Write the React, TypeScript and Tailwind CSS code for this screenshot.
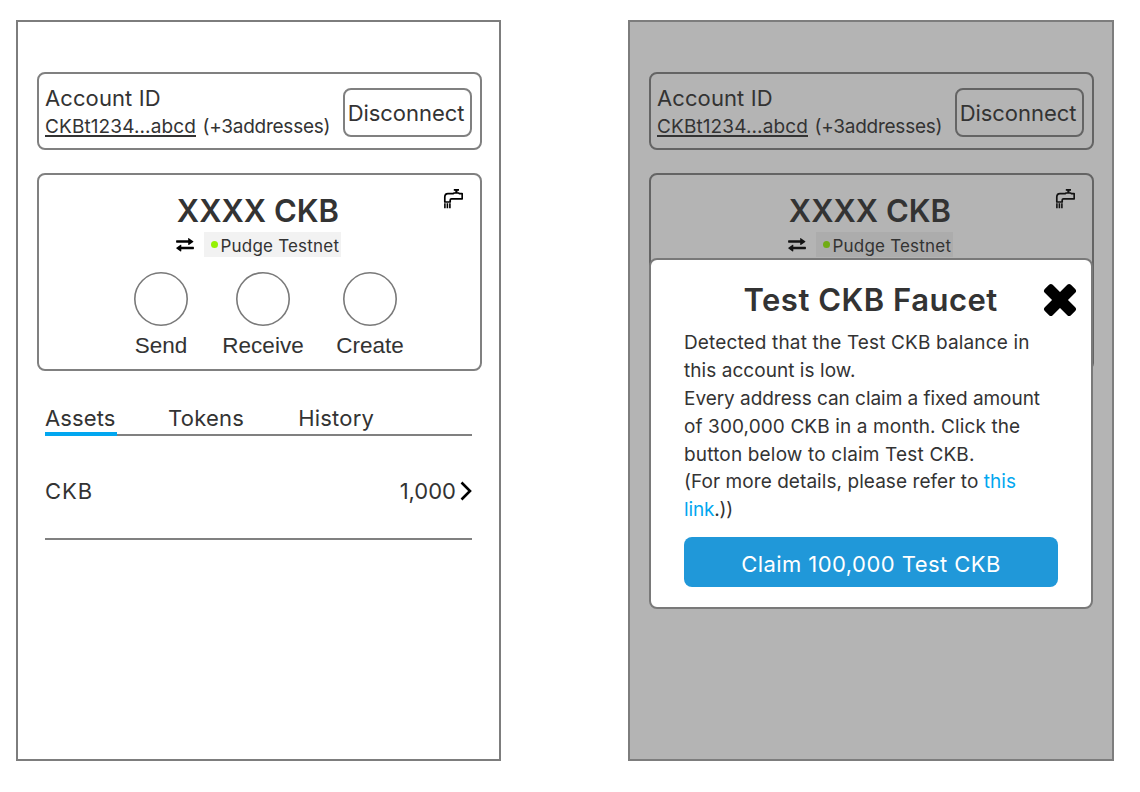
import type { ReactNode } from "react";

function FaucetIcon() {
  return (
    <svg width="20" height="20" viewBox="0 0 20 20" fill="none" stroke="#000">
      <path d="M10.800 0.900h5.200" strokeWidth="1.800" />
      <path d="M13.400 1v3" strokeWidth="2.200" />
      <path d="M1.800 13V8.200C1.800 5.800 3 4.700 5 4.700h5l1.200-.7h4.300l1.200.7h2.500v5.100H8.500c-.9 0-1.300.5-1.300 1.300V13z" strokeWidth="1.700" strokeLinejoin="round" />
      <path d="M1.900 14.300v4.900M4.400 14.300v4.900M6.900 14.300v4.900" strokeWidth="1.600" />
    </svg>
  );
}

function SwapIcon() {
  return (
    <svg width="18" height="14" viewBox="0 0 18 14" fill="#000">
      <path d="M.6 2.300h11.600V.5c0-.4.4-.5.7-.3l4.300 3c.3.200.3.500 0 .7l-4.300 3c-.3.200-.7.100-.7-.3V4.800H.6c-.3 0-.5-.2-.5-.5V2.800c0-.3.2-.5.5-.5z" />
      <path d="M17.400 8.700H5.300V7.100c0-.4-.4-.5-.7-.3L.4 9.700c-.3.200-.3.500 0 .7l4.200 3c.3.200.7.100.7-.3v-1.900h12.100c.3 0 .5-.2.5-.5V9.200c0-.3-.2-.5-.5-.5z" />
    </svg>
  );
}

function CloseIcon() {
  return (
    <svg width="34" height="34" viewBox="-17 -17 34 34" fill="#000">
      <rect x="-18.500" y="-5.600" width="37" height="11.200" rx="2.600" transform="rotate(45)" />
      <rect x="-18.500" y="-5.600" width="37" height="11.200" rx="2.600" transform="rotate(-45)" />
    </svg>
  );
}

function Action({ label, className }: { label: string; className: string }) {
  return (
    <div className={`flex flex-col items-center ${className}`}>
      <svg className="size-[54px] shrink-0" viewBox="0 0 54 54" fill="none" stroke="#797979">
        <circle cx="27" cy="27" r="26.200" strokeWidth="1.600" />
      </svg>
      <span className="mt-[5px] font-['Liberation_Sans',sans-serif] text-[22.500px] leading-[30px]">{label}</span>
    </div>
  );
}

function Wallet({ collapsed = false }: { collapsed?: boolean }) {
  return (
    <div className="w-[445px]">
      <section className="flex h-[78px] justify-between rounded-[8px] border-2 border-[#808080] pt-[10px] pr-2 pl-[6px]">
        <div>
          <div className="text-[22px] leading-7 tracking-[0.1px]">Account ID</div>
          <div className="flex pt-px text-[19px] leading-7 whitespace-nowrap">
            <span className="tracking-[0.12px] underline decoration-[1.500px] underline-offset-[2px]">CKBt1234...abcd</span>
            <span className="ml-[6.500px] tracking-[-0.25px]">(+3addresses)</span>
          </div>
        </div>
        <button className="mt-1 h-[49px] w-[129px] rounded-[8px] border-2 border-[#808080] pr-[3px] text-[22px] leading-7 tracking-[-0.05px]">
          Disconnect
        </button>
      </section>

      <section className="mt-[23px] h-[198px] rounded-[8px] border-2 border-[#808080]">
        <div className="flex h-[57px] justify-end pr-[17px]">
          <h1 className="mt-[16px] mr-[104px] text-[31px] leading-10 font-semibold whitespace-nowrap">XXXX CKB</h1>
          <div className="mt-[14px]">
            <FaucetIcon />
          </div>
        </div>
        <div className="flex items-center pl-[137px]">
          <SwapIcon />
          <div className="ml-[10px] flex h-[25px] w-[137px] items-center bg-[#f2f2f2] pl-[7px]">
            <span className="size-[7px] rounded-full bg-[#95f204]" />
            <span className="ml-[2.500px] pt-[2px] text-[17px] leading-6 tracking-[0.2px] whitespace-nowrap">Pudge Testnet</span>
          </div>
        </div>
        {!collapsed && (
          <div className="mt-[15px] flex pl-[95px]">
            <Action label="Send" className="w-[54px]" />
            <Action label="Receive" className="ml-[34.500px] w-[81px]" />
            <Action label="Create" className="ml-[32.500px] w-[68px]" />
          </div>
        )}
      </section>

      {!collapsed && (
        <>
          <nav className="mt-[32px] ml-2 flex h-[33px] w-[427px] border-b-2 border-[#808080] text-[22px] leading-[30px] tracking-[0.1px]">
            <span className="h-[33px] w-[72px] shrink-0 border-b-4 border-[#02a7f0]">Assets</span>
            <span className="ml-[51px] tracking-[0.25px]">Tokens</span>
            <span className="ml-[54px] tracking-[0.2px]">History</span>
          </nav>
          <div className="ml-2 flex h-[104px] w-[427px] items-center justify-between border-b-2 border-[#808080] pt-2 text-[22px] leading-[30px]">
            <span className="tracking-[1px]">CKB</span>
            <span className="flex items-center">
              1,000
              <svg className="ml-1 h-5 w-3" viewBox="0 0 12 20" fill="none" stroke="#000" strokeWidth="2.600">
                <path d="M1.500 1.500L10 10L1.500 18.500" />
              </svg>
            </span>
          </div>
        </>
      )}
    </div>
  );
}

function Screen({ className, collapsed, children }: { className: string; collapsed?: boolean; children?: ReactNode }) {
  return (
    <main className={`relative h-[741px] shrink-0 border-2 border-[#7d7d7d] pt-[50px] pl-[19px] ${className}`}>
      <Wallet collapsed={collapsed} />
      {children}
    </main>
  );
}

function FaucetDialog() {
  return (
    <div className="absolute inset-0 bg-[#333333]/37">
      <div role="dialog" className="mt-[236px] ml-[19px] h-[351px] w-[444px] rounded-[8px] border-2 border-[#797979] bg-white pl-[33px]">
        <div className="flex h-[69.400px]">
          <h2 className="mt-[20px] ml-[59.500px] w-[299.500px] text-[31px] leading-10 font-semibold tracking-[0.5px] whitespace-nowrap">Test CKB Faucet</h2>
          <div className="mt-[23px]">
            <CloseIcon />
          </div>
        </div>
        <div className="text-[19px] leading-[27.800px] whitespace-nowrap">
          <p className="tracking-[0.14px]">Detected that the Test CKB balance in</p>
          <p className="tracking-[0.05px]">this account is low.</p>
          <p className="tracking-[-0.04px]">Every address can claim a fixed amount</p>
          <p className="tracking-[0.1px]">of 300,000 CKB in a month. Click the</p>
          <p className="tracking-[0.17px]">button below to claim Test CKB.</p>
          <p className="tracking-[0.06px]">(For more details, please refer to <a className="text-[#02a7f0]">this</a></p>
          <p className="tracking-[-0.15px]"><a className="text-[#02a7f0]">link</a>.))</p>
        </div>
        <button className="mt-[12.600px] h-[50px] w-[374px] rounded-[8px] bg-[#2098d9] pt-1 text-[22px] leading-7 tracking-[0.450px] text-white">
          Claim 100,000 Test CKB
        </button>
      </div>
    </div>
  );
}

export default function App() {
  return (
    <div className="flex h-[792px] w-[1140px] gap-[127px] overflow-hidden bg-white pt-5 pl-4 font-['Inter',sans-serif] text-[#333333]">
      <Screen className="w-[485px]" />
      <Screen className="w-[486px]" collapsed>
        <FaucetDialog />
      </Screen>
    </div>
  );
}
